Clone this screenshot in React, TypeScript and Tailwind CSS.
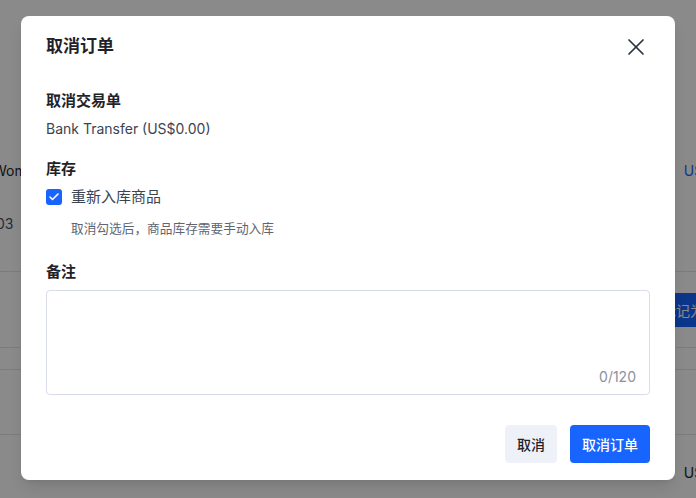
import { X, Check } from "lucide-react";

const font = { fontFamily: '"Inter", "Noto Sans CJK SC", sans-serif' };

function BackgroundPage() {
  return (
    <div className="h-[498px] w-[696px] overflow-hidden bg-white text-[14px] text-[#1f2329]">
      <div className="h-[160px]" />
      {/* product row */}
      <div className="flex h-[20px] items-center justify-between">
        <span className="-ml-[7px]">Women's Dress</span>
        <span className="mr-[-46px] text-[#1764ff]">US$0.00</span>
      </div>
      <div className="h-[33px]" />
      <div className="flex h-[20px] items-center">
        <span className="-ml-[4px] text-[#4b5160]">03</span>
      </div>
      <div className="h-[39px] border-b border-[#e2e4ea]" />
      <div className="flex h-[76px] items-start justify-end border-b border-[#e2e4ea] pt-[21px]">
        <span className="mr-[-62px] flex h-[34px] items-center rounded bg-[#1764ff] px-3 text-white">
          标记为已付款
        </span>
      </div>
      <div className="h-[22px] border-b border-[#e2e4ea]" />
      <div className="h-[65px] border-b border-[#e2e4ea]" />
      <div className="flex h-[48px] items-end justify-between">
        <span className="pl-[55px] text-[12px] leading-[20px] text-[#8a8f99]">查看详情</span>
        <span className="mr-[-46px] leading-[20px]">US$0.00</span>
      </div>
    </div>
  );
}

export default function App() {
  return (
    <div className="relative h-[498px] w-[696px] overflow-hidden" style={font}>
      <BackgroundPage />
      <div className="absolute inset-0 bg-black/[0.46]" />

      {/* Dialog */}
      <div className="absolute left-[21px] top-[16px] flex h-[464px] w-[654px] flex-col rounded-lg bg-white px-[25px] pb-[17px] pt-[17px] shadow-lg">
        <div className="flex h-[28px] items-center justify-between">
          <h2 className="text-[17px] font-semibold text-[#1f2329]">取消订单</h2>
          <X className="h-[28px] w-[28px] text-[#2b3340]" strokeWidth={1.5} />
        </div>

        <p className="mt-[29px] text-[15px] font-semibold leading-[22px] text-[#1f2329]">取消交易单</p>
        <p className="mt-[6px] text-[14px] leading-[22px] text-[#3d4451]">Bank Transfer (US$0.00)</p>

        <p className="mt-[18px] text-[15px] font-semibold leading-[22px] text-[#1f2329]">库存</p>
        <div className="mt-[6px] flex h-[22px] items-center gap-[9px]">
          <span className="flex h-[16px] w-[16px] items-center justify-center rounded-[3px] bg-[#1764ff]">
            <Check className="h-[12px] w-[12px] text-white" strokeWidth={3.2} />
          </span>
          <span className="text-[15px] text-[#3d4451]">重新入库商品</span>
        </div>
        <p className="mt-[11px] pl-[25px] text-[12.7px] leading-[20px] text-[#5f6672]">
          取消勾选后，商品库存需要手动入库
        </p>

        <p className="mt-[22px] text-[15px] font-semibold leading-[22px] text-[#1f2329]">备注</p>
        <div className="mt-[7px] flex h-[105px] flex-col justify-end rounded border border-[#d8dce8] px-[13px] pb-[6px]">
          <span className="self-end text-[14px] leading-[22px] text-[#8a919f]">0/120</span>
        </div>

        <div className="mt-auto flex justify-end gap-[13px]">
          <button className="h-[38px] rounded bg-[#eef1f7] px-[12px] text-[14px] font-medium text-[#1f2329]">
            取消
          </button>
          <button className="h-[38px] rounded bg-[#1764ff] px-[12px] text-[14px] font-medium text-white">
            取消订单
          </button>
        </div>
      </div>
    </div>
  );
}
